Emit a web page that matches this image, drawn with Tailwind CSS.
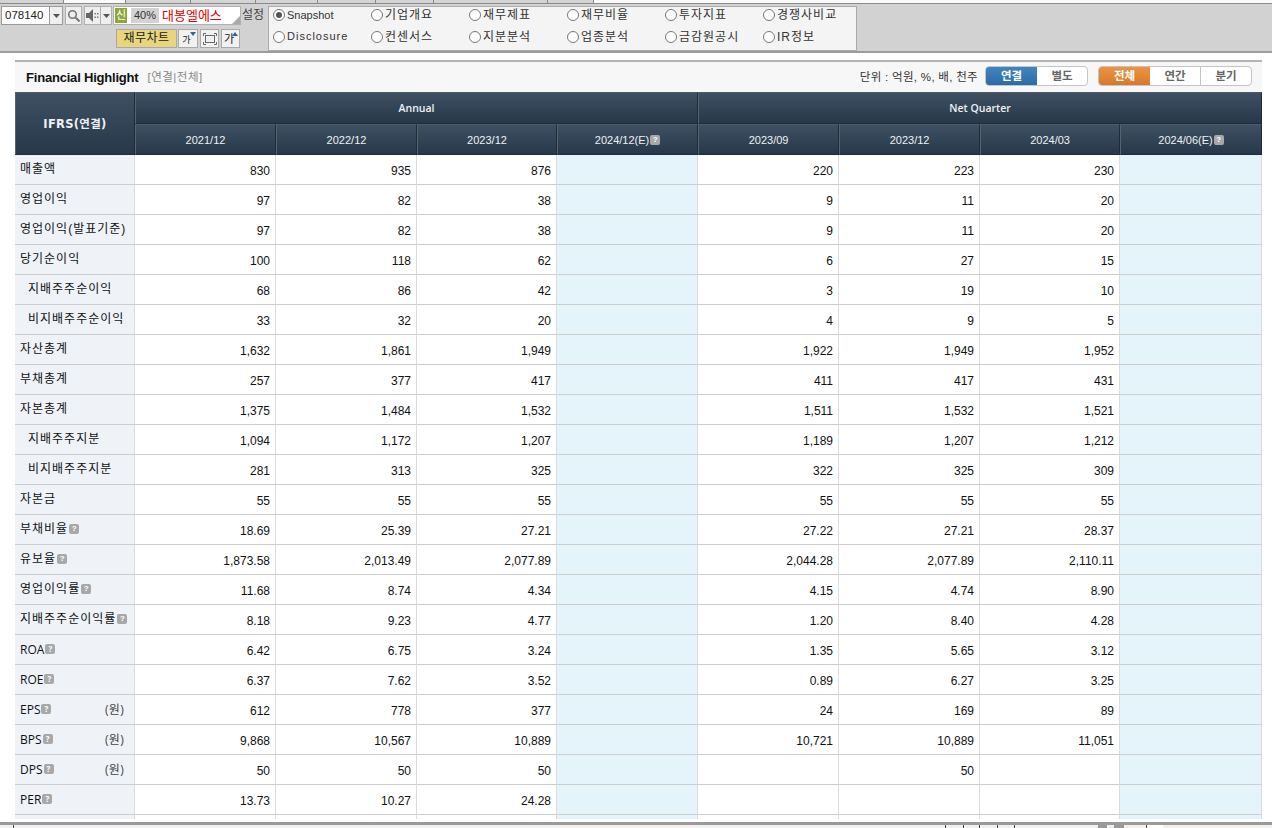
<!DOCTYPE html>
<html lang="ko">
<head>
  <meta charset="UTF-8">
  <title>Financial Highlight</title>
  <script src="https://cdn.jsdelivr.net/npm/@tailwindcss/browser@4"></script>
</head>
<body class="w-[1272px] h-[828px] overflow-hidden bg-white flex flex-col text-[12px] text-[#222] font-['Liberation_Sans','Noto_Sans_CJK_KR',sans-serif]">

  <!-- tab strip -->
  <div class="h-[4px] flex shrink-0 bg-white border-b border-[#8a8a8a]">
    <div class="w-[64px] bg-[#d4d4d4] border-r border-[#8a8a8a]"></div>
    <div class="w-[62px] bg-[#fafafa] border-r border-[#8a8a8a]"></div>
    <div class="w-[65px] bg-[#d4d4d4] border-r border-[#8a8a8a]"></div>
    <div class="w-[65px] bg-[#d4d4d4] border-r border-[#8a8a8a]"></div>
    <div class="w-[62px] bg-[#d4d4d4] border-r border-[#8a8a8a]"></div>
    <div class="w-[58px] bg-[#d4d4d4] border-r border-[#8a8a8a]"></div>
    <div class="w-[58px] bg-[#d4d4d4] border-r border-[#8a8a8a]"></div>
    <div class="w-[114px] bg-[#d4d4d4] border-r border-[#8a8a8a]"></div>
    <div class="w-[46px] bg-[#d4d4d4] border-r border-[#8a8a8a]"></div>
    <div class="flex-1 bg-[#fafafa]"></div>
  </div>

  <!-- toolbar -->
  <div class="h-[49px] shrink-0 bg-[#d2d2d2] border-b-2 border-[#9c9c9c] flex items-start pl-[1px] pt-[2px]">
    <div class="w-[267px] shrink-0">
      <div class="flex items-center h-[19px]">
        <div class="w-[49px] h-[19px] bg-white border border-[#9a9a9a] pl-[3px] leading-[17px] text-[11.5px] text-[#222]">078140</div>
        <div class="w-[13px] h-[19px] bg-[#efefef] border border-l-0 border-[#9a9a9a] flex items-center justify-center">
          <svg width="7" height="4" viewBox="0 0 7 4"><path d="M0 0h7L3.5 4z" fill="#555"/></svg>
        </div>
        <div class="w-[17px] h-[19px] ml-[2px] bg-[#efefef] border border-[#b0b0b0] flex items-center justify-center">
          <svg width="13" height="13" viewBox="0 0 13 13" fill="none" stroke="#777" stroke-width="1.6"><circle cx="5.5" cy="5.5" r="3.8"/><path d="M8.5 8.5l4 4" stroke-width="2"/></svg>
        </div>
        <div class="w-[17px] h-[19px] ml-[2px] bg-[#efefef] border border-[#b0b0b0] flex items-center justify-center">
          <svg width="13" height="13" viewBox="0 0 13 13" fill="#666"><path d="M0 4h3l4-4v13L3 9H0z"/><rect x="8.5" y="4" width="1.4" height="1.4"/><rect x="8.5" y="7.5" width="1.4" height="1.4"/><rect x="11" y="4" width="1.4" height="1.4"/><rect x="11" y="7.5" width="1.4" height="1.4"/></svg>
        </div>
        <div class="w-[11px] h-[19px] bg-[#efefef] border border-l-0 border-[#b0b0b0] flex items-center justify-center">
          <svg width="7" height="4" viewBox="0 0 7 4"><path d="M0 0h7L3.5 4z" fill="#555"/></svg>
        </div>
        <div class="relative w-[128px] h-[19px] ml-[1px] bg-white border border-[#b0b0b0] flex items-center pl-[1px]">
          <span class="w-[12px] h-[15px] bg-[#8fa53a] text-white text-[11px] leading-[15px] text-center">신</span>
          <span class="w-[28px] h-[15px] ml-[4px] bg-[#d2d2d2] text-[11px] leading-[15px] text-center text-[#333]">40%</span>
          <span class="ml-[3px] text-[#e60000] text-[13px] leading-[15px]">대봉엘에스</span>
          <svg class="absolute right-0 bottom-0" width="8" height="8" viewBox="0 0 8 8"><path d="M8 0v8H0z" fill="#aaa"/></svg>
        </div>
        <span class="ml-[1px] text-[#444] leading-[19px]">설정</span>
      </div>
      <div class="flex items-center h-[19px] mt-[4px] pl-[115px]">
        <div class="w-[61px] h-[19px] bg-[#e8d57e] border border-[#a9a9a9] text-center leading-[17px] text-[#222] text-[12px] tracking-[0.5px]">재무차트</div>
        <div class="w-[20px] h-[19px] ml-[1px] bg-[#f1f1f1] border border-[#a9a9a9] flex items-end justify-center relative text-[9px] leading-[13px] pr-[3px]">
          가
          <svg class="absolute right-[1px] top-[2px]" width="6" height="4" viewBox="0 0 6 4"><path d="M0 0h6L3 4z" fill="#3b5f96"/></svg>
        </div>
        <div class="w-[19px] h-[19px] ml-[2px] bg-[#f1f1f1] border border-[#a9a9a9] flex items-center justify-center">
          <svg width="14" height="12" viewBox="0 0 14 12" fill="none" stroke="#666"><rect x="2.5" y="2.5" width="9" height="7"/><path d="M0.5 3V0.5H3M11 0.5h2.5V3M13.5 9v2.5H11M3 11.5H0.5V9"/></svg>
        </div>
        <div class="w-[19px] h-[19px] ml-[2px] bg-[#f1f1f1] border border-[#a9a9a9] flex items-end justify-center relative text-[11px] leading-[15px] pr-[3px]">
          가
          <svg class="absolute right-[1px] top-[2px]" width="6" height="4" viewBox="0 0 6 4"><path d="M0 4h6L3 0z" fill="#3b5f96"/></svg>
        </div>
      </div>
    </div>
    <div class="w-[589px] h-[45px] bg-[#f4f4f4] border border-[#ababab] grid grid-cols-[98px_98px_98px_98px_98px_98px] grid-rows-[16px_27px] pl-[4px] text-[#333] tracking-[1px] [&_label]:flex [&_label]:items-center [&_label]:gap-[2px] [&_b]:w-[12px] [&_b]:h-[12px] [&_b]:rounded-full [&_b]:border [&_b]:border-[#777] [&_b]:bg-white [&_b]:flex [&_b]:items-center [&_b]:justify-center">
      <label><b><span class="w-[6px] h-[6px] rounded-full bg-[#555]"></span></b><span class="text-[11px] tracking-normal">Snapshot</span></label>
      <label><b></b>기업개요</label>
      <label><b></b>재무제표</label>
      <label><b></b>재무비율</label>
      <label><b></b>투자지표</label>
      <label><b></b>경쟁사비교</label>
      <label><b></b><span class="text-[11px] tracking-[1px]">Disclosure</span></label>
      <label><b></b>컨센서스</label>
      <label><b></b>지분분석</label>
      <label><b></b>업종분석</label>
      <label><b></b>금감원공시</label>
      <label><b></b>IR정보</label>
    </div>
  </div>

  <!-- content -->
  <div class="flex-1 min-h-0 pt-[7px] pl-[15px] pr-[10px]">
    <div class="h-[759px] overflow-hidden">
      <div class="h-[32px] bg-[#f7f7f7] border-t-2 border-[#b4b4b4] flex items-center pl-[11px] pr-[10px]">
        <span class="mt-[2px] font-bold text-[13px] text-[#111] tracking-[-0.2px]">Financial Highlight</span>
        <span class="mt-[2px] ml-[9px] text-[#888] text-[11.5px] tracking-[0.5px]">[연결|전체]</span>
        <span class="mt-[1px] ml-auto text-[#333] text-[11.5px] tracking-[0.3px]">단위 : 억원, %, 배, 천주</span>
        <div class="mb-[2px] ml-[7px] flex h-[20px] w-[103px] rounded-[4px] border border-[#c4c4c4] bg-white text-[#666] font-bold text-[11.5px] text-center leading-[18px] overflow-hidden">
          <span class="w-[51px] bg-gradient-to-b from-[#4186bf] to-[#2d6ba6] text-white">연결</span>
          <span class="flex-1">별도</span>
        </div>
        <div class="mb-[2px] ml-[10px] flex h-[20px] w-[154px] rounded-[4px] border border-[#c4c4c4] bg-white text-[#666] font-bold text-[11.5px] text-center leading-[18px] overflow-hidden">
          <span class="w-[51px] bg-gradient-to-b from-[#ec9444] to-[#d67a28] text-white">전체</span>
          <span class="w-[51px] border-r border-[#c4c4c4]">연간</span>
          <span class="flex-1">분기</span>
        </div>
      </div>

      <table class="w-[1247px] table-fixed border-separate border-spacing-0 text-[12px] text-[#111] [&_th]:pt-[2px] [&_th]:font-normal [&_th]:text-[11px] [&_th]:text-[#eef1f4] [&_th]:bg-gradient-to-b [&_th]:from-[#3e5062] [&_th]:to-[#28384a] [&_th]:border [&_th]:border-t-[#4b5b6b] [&_th]:border-l-[#55646f] [&_th]:border-r-[#1e2b38] [&_th]:border-b-[#1e2b38] [&_td]:h-[30px] [&_td]:border-b [&_td]:border-r [&_td]:border-b-[#cdcdcd] [&_td]:border-r-[#dcdcdc] [&_td]:text-right [&_td]:pr-[5px] [&_td]:pt-[2px] [&_td:first-child]:tracking-[1px] [&_td:first-child]:bg-[#eff3f8] [&_td:first-child]:text-left [&_td:first-child]:pl-[5px] [&_td:first-child]:pt-0 [&_td:first-child]:pb-[2px] [&_td:nth-child(5)]:bg-[#e5f4fa] [&_td:nth-child(9)]:bg-[#e5f4fa] [&_i]:inline-block [&_i]:w-[10px] [&_i]:h-[10px] [&_i]:ml-[1px] [&_i]:rounded-[2px] [&_i]:bg-[#a8a8a8] [&_i]:text-white [&_i]:not-italic [&_i]:font-bold [&_i]:tracking-normal [&_i]:text-[8px] [&_i]:leading-[10px] [&_i]:text-center [&_i]:align-[2px] [&_em]:float-right [&_em]:not-italic [&_em]:tracking-[0.3px] [&_em]:mr-[5px] [&_em]:text-[#444] [&_td.en:first-child]:font-['Open_Sans','Noto_Sans_CJK_KR',sans-serif] [&_td.en:first-child]:tracking-normal [&_td.en:first-child]:pb-0">
        <colgroup>
          <col class="w-[120px]"><col class="w-[141px]"><col class="w-[141px]"><col class="w-[140px]"><col class="w-[141px]"><col class="w-[141px]"><col class="w-[141px]"><col class="w-[140px]"><col class="w-[142px]">
        </colgroup>
        <thead>
          <tr class="h-[32px]">
            <th rowspan="2" class="!font-bold !text-[11.5px] tracking-[0.3px] font-['DejaVu_Sans','Noto_Sans_CJK_KR',sans-serif]">IFRS(연결)</th>
            <th colspan="4" class="!font-semibold !text-[10.5px] font-['Open_Sans',sans-serif]">Annual</th>
            <th colspan="4" class="!font-semibold !text-[10.5px] font-['Open_Sans',sans-serif]">Net Quarter</th>
          </tr>
          <tr class="h-[31px]">
            <th>2021/12</th><th>2022/12</th><th>2023/12</th><th>2024/12(E)<i>?</i></th>
            <th>2023/09</th><th>2023/12</th><th>2024/03</th><th>2024/06(E)<i>?</i></th>
          </tr>
        </thead>
        <tbody>
          <tr><td>매출액</td><td>830</td><td>935</td><td>876</td><td></td><td>220</td><td>223</td><td>230</td><td></td></tr>
          <tr><td>영업이익</td><td>97</td><td>82</td><td>38</td><td></td><td>9</td><td>11</td><td>20</td><td></td></tr>
          <tr><td>영업이익(발표기준)</td><td>97</td><td>82</td><td>38</td><td></td><td>9</td><td>11</td><td>20</td><td></td></tr>
          <tr><td>당기순이익</td><td>100</td><td>118</td><td>62</td><td></td><td>6</td><td>27</td><td>15</td><td></td></tr>
          <tr><td class="!pl-[13px]">지배주주순이익</td><td>68</td><td>86</td><td>42</td><td></td><td>3</td><td>19</td><td>10</td><td></td></tr>
          <tr><td class="!pl-[13px]">비지배주주순이익</td><td>33</td><td>32</td><td>20</td><td></td><td>4</td><td>9</td><td>5</td><td></td></tr>
          <tr><td>자산총계</td><td>1,632</td><td>1,861</td><td>1,949</td><td></td><td>1,922</td><td>1,949</td><td>1,952</td><td></td></tr>
          <tr><td>부채총계</td><td>257</td><td>377</td><td>417</td><td></td><td>411</td><td>417</td><td>431</td><td></td></tr>
          <tr><td>자본총계</td><td>1,375</td><td>1,484</td><td>1,532</td><td></td><td>1,511</td><td>1,532</td><td>1,521</td><td></td></tr>
          <tr><td class="!pl-[13px]">지배주주지분</td><td>1,094</td><td>1,172</td><td>1,207</td><td></td><td>1,189</td><td>1,207</td><td>1,212</td><td></td></tr>
          <tr><td class="!pl-[13px]">비지배주주지분</td><td>281</td><td>313</td><td>325</td><td></td><td>322</td><td>325</td><td>309</td><td></td></tr>
          <tr><td>자본금</td><td>55</td><td>55</td><td>55</td><td></td><td>55</td><td>55</td><td>55</td><td></td></tr>
          <tr><td>부채비율<i>?</i></td><td>18.69</td><td>25.39</td><td>27.21</td><td></td><td>27.22</td><td>27.21</td><td>28.37</td><td></td></tr>
          <tr><td>유보율<i>?</i></td><td>1,873.58</td><td>2,013.49</td><td>2,077.89</td><td></td><td>2,044.28</td><td>2,077.89</td><td>2,110.11</td><td></td></tr>
          <tr><td>영업이익률<i>?</i></td><td>11.68</td><td>8.74</td><td>4.34</td><td></td><td>4.15</td><td>4.74</td><td>8.90</td><td></td></tr>
          <tr><td>지배주주순이익률<i>?</i></td><td>8.18</td><td>9.23</td><td>4.77</td><td></td><td>1.20</td><td>8.40</td><td>4.28</td><td></td></tr>
          <tr><td class="en">ROA<i>?</i></td><td>6.42</td><td>6.75</td><td>3.24</td><td></td><td>1.35</td><td>5.65</td><td>3.12</td><td></td></tr>
          <tr><td class="en">ROE<i>?</i></td><td>6.37</td><td>7.62</td><td>3.52</td><td></td><td>0.89</td><td>6.27</td><td>3.25</td><td></td></tr>
          <tr><td class="en">EPS<i>?</i><em>(원)</em></td><td>612</td><td>778</td><td>377</td><td></td><td>24</td><td>169</td><td>89</td><td></td></tr>
          <tr><td class="en">BPS<i>?</i><em>(원)</em></td><td>9,868</td><td>10,567</td><td>10,889</td><td></td><td>10,721</td><td>10,889</td><td>11,051</td><td></td></tr>
          <tr><td class="en">DPS<i>?</i><em>(원)</em></td><td>50</td><td>50</td><td>50</td><td></td><td></td><td>50</td><td></td><td></td></tr>
          <tr><td class="en">PER<i>?</i></td><td>13.73</td><td>10.27</td><td>24.28</td><td></td><td></td><td></td><td></td><td></td></tr>
          <tr><td></td><td></td><td></td><td></td><td></td><td></td><td></td><td></td><td></td></tr>
        </tbody>
      </table>
    </div>
  </div>

  <!-- status bar -->
  <div class="h-[6px] shrink-0 bg-[#f0f0f0] border-t-[3px] border-[#9a9a9a] flex">
    <div class="w-[14px] border-r border-[#444]"></div>
    <div class="w-[932px] border-r border-[#444]"></div>
    <div class="w-[18px] border-r border-[#444]"></div>
    <div class="w-[16px] border-r border-[#444]"></div>
    <div class="w-[18px] border-r border-[#444]"></div>
    <div class="w-[17px] border-r border-[#444]"></div>
    <div class="w-[83px]"></div>
    <div class="w-[9px] bg-[#999]"></div>
    <div class="w-[7px]"></div>
    <div class="w-[10px] bg-[#999]"></div>
    <div class="w-[23px] border-r border-[#444]"></div>
    <div class="w-[16px] bg-white"></div>
    <div class="flex-1"></div>
  </div>
</body>
</html>
